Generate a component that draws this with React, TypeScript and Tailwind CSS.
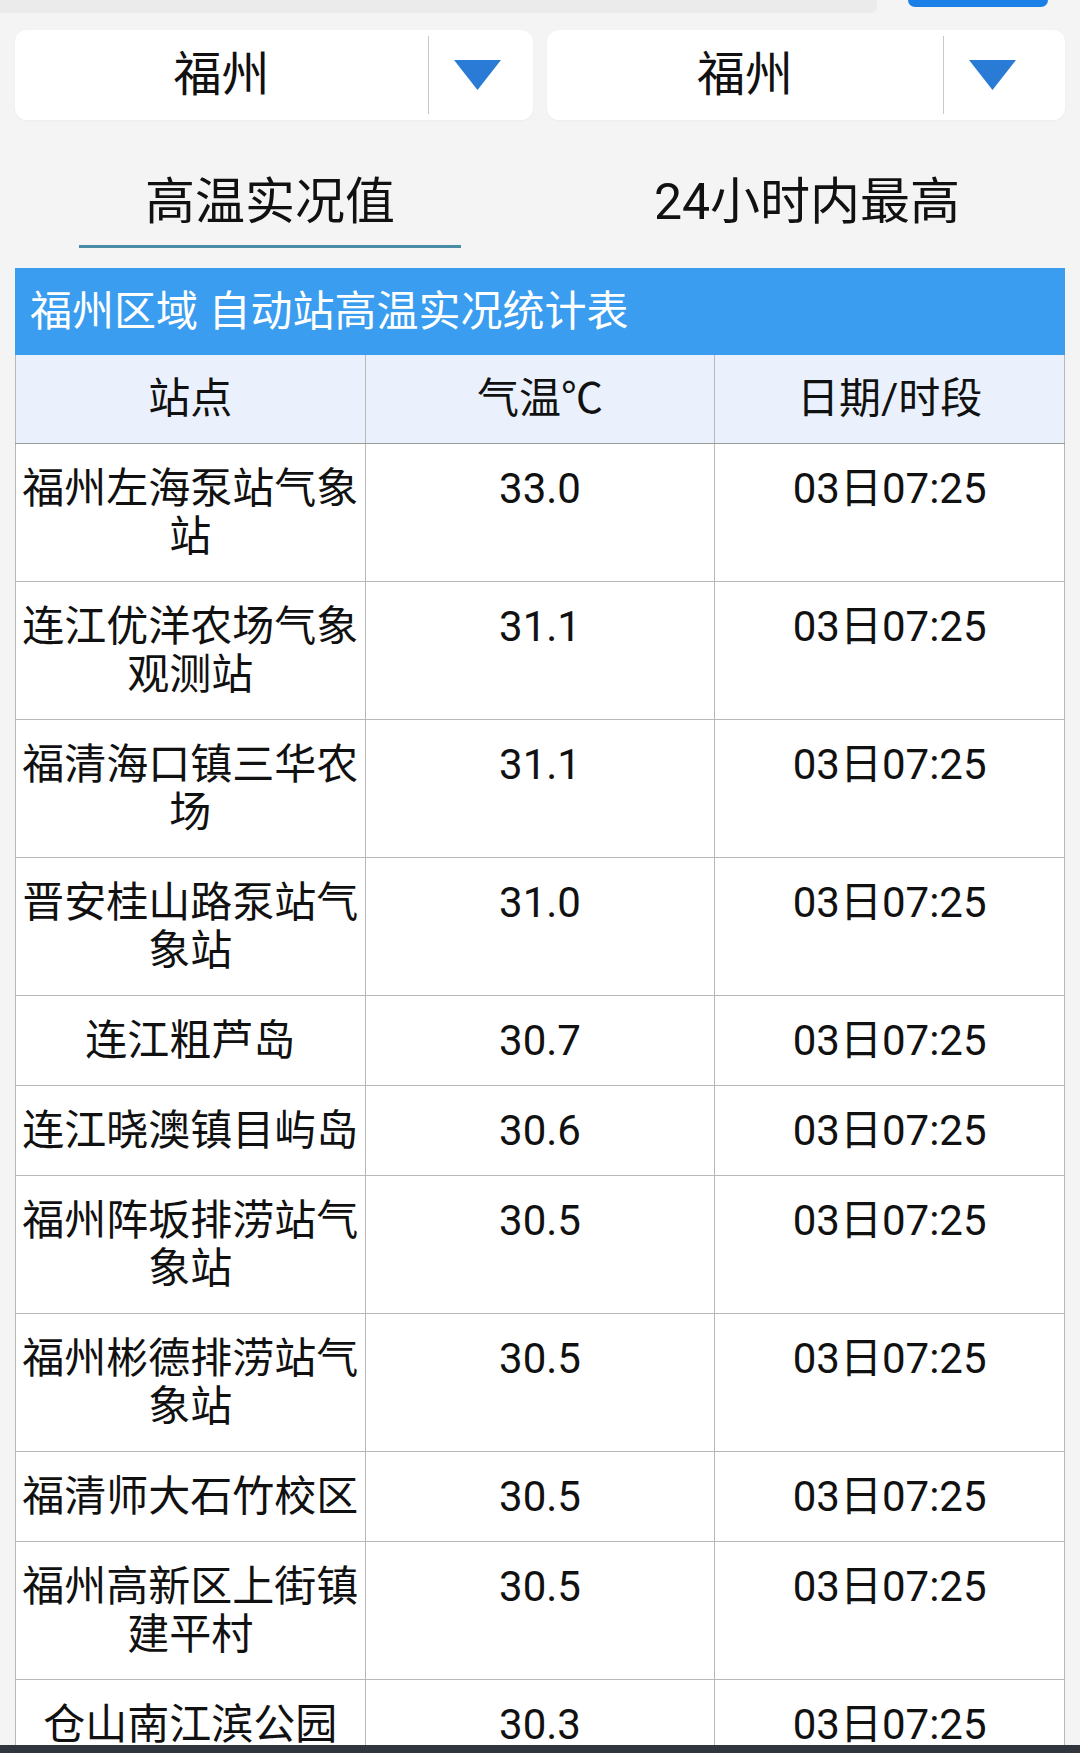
const rows = [
  { name: "福州左海泵站气象站", temp: "33.0" },
  { name: "连江优洋农场气象观测站", temp: "31.1" },
  { name: "福清海口镇三华农场", temp: "31.1" },
  { name: "晋安桂山路泵站气象站", temp: "31.0" },
  { name: "连江粗芦岛", temp: "30.7" },
  { name: "连江晓澳镇目屿岛", temp: "30.6" },
  { name: "福州阵坂排涝站气象站", temp: "30.5" },
  { name: "福州彬德排涝站气象站", temp: "30.5" },
  { name: "福清师大石竹校区", temp: "30.5" },
  { name: "福州高新区上街镇建平村", temp: "30.5" },
  { name: "仓山南江滨公园", temp: "30.3" },
]

function CityPicker({ city, arrowWidth }: { city: string; arrowWidth: string }) {
  return (
    <div className="flex h-[90px] flex-1 rounded-[12px] bg-white shadow-[0_1px_3px_rgba(0,0,0,0.04)]">
      <div className="flex flex-1 items-center justify-center text-[48px] text-[#111]">{city}</div>
      <div className="my-[6px] w-px bg-[#c8c8c8]" />
      <div className={`flex items-center pl-[25px] ${arrowWidth}`}>
        <svg width="47" height="30" viewBox="0 0 47 30">
          <polygon points="0,0 47,0 23.5,30" fill="#2a7bd5" />
        </svg>
      </div>
    </div>
  )
}

export default function App() {
  return (
    <div className="flex h-[1753px] w-[1080px] flex-col overflow-hidden bg-[#f4f4f4] font-['Roboto','Noto_Sans_CJK_SC',sans-serif]">
      <div className="flex-1 overflow-hidden">
        <div className="flex h-[30px] items-start">
          <div className="h-[13px] flex-1 rounded-br-[6px] bg-[#ebebeb]" />
          <div className="ml-[31px] mr-[32px] h-[7px] w-[140px] rounded-b-[8px] bg-[#1a7fe6]" />
        </div>

        <div className="flex gap-[14px] px-[15px]">
          <CityPicker city="福州" arrowWidth="w-[104px]" />
          <CityPicker city="福州" arrowWidth="w-[121px]" />
        </div>

        <div className="grid h-[148px] grid-cols-2">
          <div className="flex flex-col items-center pt-[52px]">
            <div className="text-[50px] leading-[60px] text-[#111]">高温实况值</div>
            <div className="mt-[13px] h-[3px] w-[382px] bg-[#4a8ba6]" />
          </div>
          <div className="flex flex-col items-center pt-[52px] pr-[6px]">
            <div className="text-[50px] leading-[60px] text-[#111]">24小时内最高</div>
          </div>
        </div>

        <div className="mx-[15px] w-[1050px]">
          <div className="flex h-[87px] items-center bg-[#3a9df0] pl-[15px] text-[42px] text-white">
            福州区域 自动站高温实况统计表
          </div>
          <table className="w-full table-fixed border-collapse text-[42px] text-[#111]">
            <thead>
              <tr className="bg-[#eaf1fc]">
                <th className="h-[88px] border border-t-0 border-[#b8b8b8] border-b-[#9a9a9a] font-normal">站点</th>
                <th className="h-[88px] border border-t-0 border-[#b8b8b8] border-b-[#9a9a9a] font-normal">气温℃</th>
                <th className="h-[88px] border border-t-0 border-[#b8b8b8] border-b-[#9a9a9a] font-normal">日期/时段</th>
              </tr>
            </thead>
            <tbody>
              {rows.map((row, i) => (
                <tr key={i} className="bg-white">
                  <td className="border border-[#b8b8b8] px-[5px] pt-[21px] pb-[20px] text-center align-top leading-[48px]">
                    {row.name}
                  </td>
                  <td className="border border-[#b8b8b8] px-[5px] pt-[21px] pb-[20px] text-center align-top leading-[48px]">
                    {row.temp}
                  </td>
                  <td className="border border-[#b8b8b8] px-[5px] pt-[21px] pb-[20px] text-center align-top leading-[48px]">
                    03日07:25
                  </td>
                </tr>
              ))}
            </tbody>
          </table>
        </div>
      </div>
      <div className="h-[8px] bg-[#31363e]" />
    </div>
  )
}
